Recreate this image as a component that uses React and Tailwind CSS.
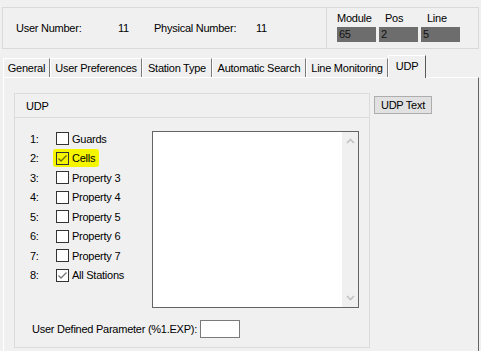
import React from "react";

function Check({ color = "#333333" }) {
  return (
    <svg width="11" height="11" viewBox="0 0 11 11" className="block">
      <path d="M1.5 5.5 L4 8 L9.5 2.5" fill="none" stroke={color} strokeWidth="1.3" />
    </svg>
  );
}

function Box({ checked, color, transparent }) {
  return (
    <div
      className={
        "w-[13px] h-[13px] shrink-0 border border-[#333333] flex items-center justify-center " +
        (transparent ? "bg-transparent" : "bg-white")
      }
    >
      {checked ? <Check color={color} /> : null}
    </div>
  );
}

const rows = [
  { n: "1:", label: "Guards" },
  { n: "2:", label: "Cells", checked: true, hl: true },
  { n: "3:", label: "Property 3" },
  { n: "4:", label: "Property 4" },
  { n: "5:", label: "Property 5" },
  { n: "6:", label: "Property 6" },
  { n: "7:", label: "Property 7" },
  { n: "8:", label: "All Stations", checked: true },
];

const tabs = [
  { t: "General", w: "w-[47px]" },
  { t: "User Preferences", w: "w-[92px]" },
  { t: "Station Type", w: "w-[70px]" },
  { t: "Automatic Search", w: "w-[94px]" },
  { t: "Line Monitoring", w: "w-[82px]" },
];

export default function App() {
  return (
    <div
      className="w-[481px] h-[351px] bg-[#f0f0f0] overflow-hidden text-black text-[11px] tracking-[-0.25px] leading-[12px]"
      style={{ fontFamily: '"Liberation Sans", Arial, sans-serif' }}
    >
      {/* Header */}
      <div className="flex pt-[7px] pl-[2px]">
        <div className="w-[325px] h-[42px] border border-[#d9d9d9] flex items-center pl-[13px]">
          <span className="w-[102px]">User Number:</span>
          <span className="w-[36px]">11</span>
          <span className="w-[102px]">Physical Number:</span>
          <span>11</span>
        </div>
        <div className="-ml-px w-[153px] h-[42px] border border-[#d9d9d9] pl-[10px]">
          <div className="grid grid-cols-[39px_39px_39px] gap-x-[3px] mt-[4px]">
            <span>Module</span>
            <span className="pl-[6px]">Pos</span>
            <span className="pl-[6px]">Line</span>
          </div>
          <div className="grid grid-cols-[39px_39px_39px] gap-x-[3px] mt-[3px]">
            <div className="h-[15px] bg-[#6d6d6d] pl-[2px] leading-[15px] text-[#111]">65</div>
            <div className="h-[15px] bg-[#6d6d6d] pl-[2px] leading-[15px] text-[#111]">2</div>
            <div className="h-[15px] bg-[#6d6d6d] pl-[2px] leading-[15px] text-[#111]">5</div>
          </div>
        </div>
      </div>

      {/* Tabs */}
      <div className="flex items-end h-[22px] mt-[6px] pl-[3px]">
        {tabs.map((tb) => (
          <div
            key={tb.t}
            className={
              tb.w +
              " h-[19px] border-l border-l-white border-t border-t-white border-r border-r-[#7a7a7a] flex items-center justify-center whitespace-nowrap"
            }
          >
            {tb.t}
          </div>
        ))}
        <div className="relative z-10 w-[38px] h-[23px] -mb-px bg-[#f0f0f0] border-l border-l-white border-t border-t-white border-r border-r-[#5a5a5a] flex items-start justify-center pt-[4px]">
          UDP
        </div>
      </div>

      {/* Panel */}
      <div className="ml-[3px] w-[476px] h-[280px] border-t border-t-white border-l border-l-white border-r border-r-[#646464] flex items-start">
        {/* Group box */}
        <div className="ml-[10px] mt-[15px] w-[356px] h-[255px] border border-[#dcdcdc] flex flex-col">
          <div className="h-[24px] border-b border-[#dcdcdc] pl-[11px] flex items-center">UDP</div>
          <div className="flex items-start pt-[11px] pl-[15px]">
            <div className="w-[122px] flex flex-col">
              {rows.map((r) => (
                <div key={r.n} className="h-[19.5px] flex items-center">
                  <span className="w-[26px]">{r.n}</span>
                  {r.hl ? (
                    <div className="-ml-[3px] flex items-center gap-[3px] bg-[#f5f500] rounded-[3px] pl-[3px] pr-[4px] h-[18px]">
                      <Box checked transparent color="#6b6b00" />
                      <span>{r.label}</span>
                    </div>
                  ) : (
                    <div className="flex items-center gap-[3px]">
                      <Box checked={r.checked} color="#777777" />
                      <span className="whitespace-nowrap">{r.label}</span>
                    </div>
                  )}
                </div>
              ))}
            </div>
            <div className="mt-[2px] w-[207px] h-[177px] border border-[#646464] bg-white flex justify-end">
              <div className="w-[16px] h-full bg-[#f0f0f0] flex flex-col items-center justify-between py-[6px]">
                <svg width="9" height="6" viewBox="0 0 9 6">
                  <path d="M1 5 L4.5 1.5 L8 5" fill="none" stroke="#c2c2c2" strokeWidth="1.6" />
                </svg>
                <svg width="9" height="6" viewBox="0 0 9 6">
                  <path d="M1 1 L4.5 4.5 L8 1" fill="none" stroke="#c2c2c2" strokeWidth="1.6" />
                </svg>
              </div>
            </div>
          </div>
          <div className="flex items-center pl-[17px] mt-[12px]">
            <span className="w-[168px] whitespace-nowrap">User Defined Parameter (%1.EXP):</span>
            <div className="w-[40px] h-[18px] bg-white border border-[#7a7a7a]"></div>
          </div>
        </div>
        {/* UDP Text button */}
        <div className="ml-[4px] mt-[18px] w-[58px] h-[18px] bg-[#e1e1e1] border border-[#adadad] flex items-center justify-center">
          UDP Text
        </div>
      </div>
    </div>
  );
}
